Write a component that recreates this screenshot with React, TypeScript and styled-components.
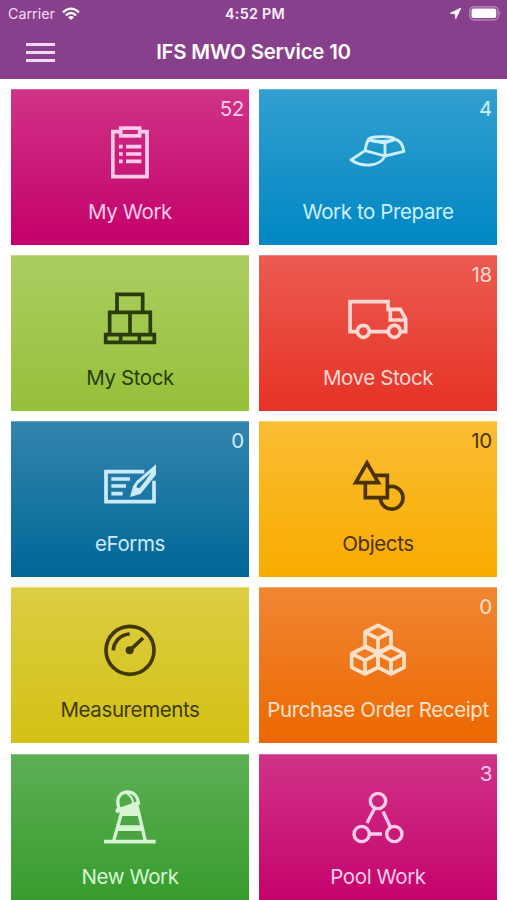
import React from "react";
import styled, { createGlobalStyle } from "styled-components";

const GlobalStyle = createGlobalStyle`
  html, body { margin: 0; height: 100%; overflow: hidden; }
  body { background: #fff; font-family: Inter, "Liberation Sans", sans-serif; }
`;

const Screen = styled.div`
  width: 507px;
  height: 900px;
  overflow: hidden;
  background: #fff;
`;

const Header = styled.header`
  height: 79px;
  background: #88408d;
  color: #fff;
`;

const StatusBar = styled.div`
  display: grid;
  grid-template-columns: 1fr auto 1fr;
  align-items: center;
  height: 27px;
  padding: 0 5px 0 8px;
`;

const Carrier = styled.div`
  display: flex;
  align-items: center;
  gap: 7px;
  color: #f3dcf5;
  font-size: 14.3px;
`;

const Clock = styled.div`
  color: #fdf0ff;
  font-size: 14.3px;
  font-weight: 600;
  letter-spacing: 0.3px;
`;

const Indicators = styled.div`
  display: flex;
  justify-content: flex-end;
  align-items: center;
  gap: 7px;
`;

const NavBar = styled.div`
  display: grid;
  grid-template-columns: 60px 1fr 60px;
  align-items: center;
  height: 50px;
`;

const MenuButton = styled.button`
  display: flex;
  flex-direction: column;
  gap: 5px;
  width: 29px;
  margin: 1px 0 0 26px;
  padding: 0;
  border: 0;
  background: none;
`;

const MenuLine = styled.span`
  height: 3px;
  background: #f3d9f5;
`;

const Title = styled.h1`
  margin: 0;
  text-align: center;
  font-size: 20.4px;
  font-weight: 600;
  line-height: 24px;
  letter-spacing: -0.2px;
  white-space: nowrap;
`;

const Grid = styled.main`
  display: grid;
  grid-template-columns: 238px 238px;
  grid-auto-rows: 156px;
  gap: 10.15px 10px;
  padding: 10px 10px 0 11px;
`;

const Tile = styled.section<{ $from: string; $to: string; $edge: string; $ink: string }>`
  position: relative;
  display: flex;
  flex-direction: column;
  align-items: center;
  box-sizing: border-box;
  padding-top: 29px;
  background: linear-gradient(${(p) => p.$from}, ${(p) => p.$to});
  box-shadow: inset 0 1px ${(p) => p.$edge};
  color: ${(p) => p.$ink};
`;

const Glyph = styled.svg`
  display: block;
  width: 80px;
  height: 70px;
  fill: none;
  stroke: currentColor;
  stroke-width: 11;
`;

const Label = styled.div`
  margin-top: 12px;
  font-size: 20.5px;
  line-height: 24px;
  letter-spacing: -0.4px;
  white-space: nowrap;
`;

const Count = styled.span`
  position: absolute;
  top: 8px;
  right: 5px;
  font-size: 20.5px;
  line-height: 24px;
  letter-spacing: -0.3px;
`;

const WifiIcon = () => (
  <svg width="18" height="14" viewBox="0 0 18 14" fill="none" stroke="#fff" strokeWidth="2.3">
    <path d="M1 5.3Q9-2 17 5.3M3.9 8.3Q9 3.8 14.1 8.3" />
    <path d="M6.1 10.2Q9 7.9 11.9 10.2L9 13.1Z" fill="#fff" stroke="none" />
  </svg>
);

const LocationIcon = () => (
  <svg width="13" height="13" viewBox="0 0 13 13">
    <path d="M12 1 6.700 11.800 6.200 6.800 1.200 6.200Z" fill="#fff" stroke="#fff" strokeWidth=".7" strokeLinejoin="round" />
  </svg>
);

const BatteryIcon = () => (
  <svg width="33" height="15" viewBox="0 0 33 15">
    <rect x=".8" y=".8" width="28.4" height="13" rx="3.8" fill="none" stroke="#bd91c2" strokeWidth="1.2" />
    <rect x="2.5" y="2.6" width="24.8" height="9.4" rx="2" fill="#fff" />
    <path d="M30.5 5Q32.5 7.3 30.5 9.6Z" fill="#bd91c2" />
  </svg>
);

const Clipboard = () => (
  <Glyph viewBox="30 24 240 210">
    <path d="M120 65H98.500V200H201V65H180" />
    <rect x="122" y="54.500" width="57" height="23" />
    <path d="M117 110h11M138 110h46M117 132h11M138 132h46M117 154h11M138 154h46" />
  </Glyph>
);

const Cap = () => (
  <Glyph viewBox="24 24 240 210">
    <g strokeWidth="8.500" strokeLinejoin="round">
      <ellipse cx="155" cy="87" rx="38" ry="7" />
      <path d="M116 87Q107 104 105 122L165 138 222 124Q216 91 193 87M118 91 165 99 193 89M165 99V138M105 122 63 150C96 172 149 172 165 138" />
    </g>
  </Glyph>
);

const Boxes = () => (
  <Glyph viewBox="0 12 240 210">
    <path d="M81 97V43H158V97M59 164V97H181V164M120 97V164M47 164H193V187H47ZM92 164V187M148 164V187" />
  </Glyph>
);

const Van = () => (
  <Glyph viewBox="9 12 240 210">
    <path d="M65 155H45V65H159V88H196L212 116V155H198M105 155H158M166 88V120H212" />
    <circle cx="85" cy="154" r="18" />
    <circle cx="178" cy="154" r="18" />
  </Glyph>
);

const Form = () => (
  <Glyph viewBox="0 0 240 210">
    <path d="M163 65H48V155H192V92M64 87H120M64 108H108M64 131H98" />
    <path
      d="M198 43 139 94 129 109 120 141 151 132 163 118 198 74ZM184 67 165 94 148 115 139 112 143 103Z"
      fill="currentColor"
      fillRule="evenodd"
      stroke="none"
    />
  </Glyph>
);

const Shapes = () => (
  <Glyph viewBox="-6 0 240 210">
    <path d="M81 39 47 98H115Z" />
    <path d="M104 76H142V143H76V101" />
    <path d="M145 111A34 34 0 1 1 121 143" />
  </Glyph>
);

const Gauge = () => (
  <Glyph viewBox="0 4 240 210">
    <circle cx="120" cy="107" r="72" />
    <path d="M70 107A51 51 0 0 1 119 58M122 105 159 70" />
    <circle cx="119" cy="107" r="12" fill="currentColor" stroke="none" />
  </Glyph>
);

const Cubes = () => (
  <Glyph viewBox="-6 4 240 210">
    <g strokeWidth="11" strokeLinejoin="round">
      <path d="M114 32 153 52V94L114 114 75 94V52ZM75 52 114 72 153 52M114 72V112" />
      <path d="M75 97 114 117V158L75 178 35 158V117ZM35 117 75 137 114 117M75 137V178" />
      <path d="M153 97 192 117V158L153 178 114 158V117ZM114 117 153 137 192 117M153 137V178" />
    </g>
  </Glyph>
);

const Lighthouse = () => (
  <Glyph viewBox="0 7 240 210">
    <path d="M42 183H197" />
    <path d="M97 88 71 181M141 74 166 181" strokeWidth="10" />
    <path d="M88 84C76 58 88 34 112 34C134 34 144 49 145 67" strokeWidth="10" />
    <path d="M110 38Q129 47 129 70" strokeWidth="6" />
    <path d="M80 91 149 66" strokeWidth="12" />
    <circle cx="83" cy="90" r="7" fill="currentColor" stroke="none" />
    <path d="M94 84 140 68 149 106H90ZM84 134H155L159 151H80Z" fill="currentColor" stroke="none" />
  </Glyph>
);

const Network = () => (
  <Glyph viewBox="-6 97 240 210">
    <g strokeWidth="10">
      <circle cx="114" cy="151" r="23" />
      <circle cx="65" cy="250" r="23" />
      <circle cx="163" cy="250" r="23" />
      <path d="M104 173 81 217M129 182 151 229M89 250H126" />
    </g>
  </Glyph>
);

type TileData = {
  label: string;
  count?: number;
  icon: React.FC;
  from: string;
  to: string;
  edge: string;
  ink: string;
};

const tiles: TileData[] = [
  { label: "My Work", count: 52, icon: Clipboard, from: "#d03388", to: "#c4006a", edge: "#dc63a4", ink: "#ffcdea" },
  { label: "Work to Prepare", count: 4, icon: Cap, from: "#339fd0", to: "#0087c3", edge: "#61b6dd", ink: "#cdf0ff" },
  { label: "My Stock", icon: Boxes, from: "#abcd61", to: "#96c03a", edge: "#c0da88", ink: "#2a3c08" },
  { label: "Move Stock", count: 18, icon: Van, from: "#ec5b50", to: "#e63226", edge: "#f1847c", ink: "#ffd8d3" },
  { label: "eForms", count: 0, icon: Form, from: "#3385ad", to: "#006797", edge: "#65a4c2", ink: "#ccebfa" },
  { label: "Objects", count: 10, icon: Shapes, from: "#fabd33", to: "#f8ac00", edge: "#fbce66", ink: "#4b3300" },
  { label: "Measurements", icon: Gauge, from: "#dccd43", to: "#d3c114", edge: "#e5da74", ink: "#3f3900" },
  { label: "Purchase Order Receipt", count: 0, icon: Cubes, from: "#f18633", to: "#ed6800", edge: "#f4a466", ink: "#ffe1ca" },
  { label: "New Work", icon: Lighthouse, from: "#5daf55", to: "#359b2b", edge: "#86c380", ink: "#d7f5d3" },
  { label: "Pool Work", count: 3, icon: Network, from: "#d03388", to: "#c4006a", edge: "#dc63a4", ink: "#ffcdea" },
];

export default function App() {
  return (
    <Screen>
      <GlobalStyle />
      <Header>
        <StatusBar>
          <Carrier>Carrier <WifiIcon /></Carrier>
          <Clock>4:52 PM</Clock>
          <Indicators><LocationIcon /><BatteryIcon /></Indicators>
        </StatusBar>
        <NavBar>
          <MenuButton aria-label="Menu"><MenuLine /><MenuLine /><MenuLine /></MenuButton>
          <Title>IFS MWO Service 10</Title>
        </NavBar>
      </Header>
      <Grid>
        {tiles.map(({ label, count, icon: Icon, from, to, edge, ink }) => (
          <Tile key={label} $from={from} $to={to} $edge={edge} $ink={ink}>
            {count !== undefined && <Count>{count}</Count>}
            <Icon />
            <Label>{label}</Label>
          </Tile>
        ))}
      </Grid>
    </Screen>
  );
}
